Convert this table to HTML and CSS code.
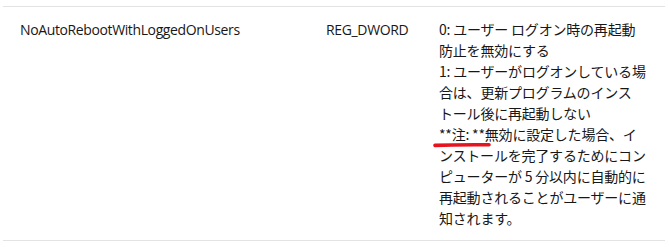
FILE: index.html
```html
<!DOCTYPE html>
<html lang="ja">
<head>
<meta charset="utf-8">
<link rel="stylesheet" href="styles.css">
</head>
<body>
<div class="wrap">
  <table class="policy">
    <tbody>
      <tr>
        <td class="name">NoAutoRebootWithLoggedOnUsers</td>
        <td class="type">REG_DWORD</td>
        <td class="desc">0: ユーザー ログオン時の再起動<br>防止を無効にする<br>1: ユーザーがログオンしている場<br>合は、更新プログラムのインス<br>トール後に再起動しない<br><span class="note">**注: **<svg class="mark" width="60" height="8" viewBox="0 0 60 8"><path d="M2 4.4 Q 20 3.6 56 3.8" stroke="#e5141f" stroke-width="3.6" stroke-linecap="round" fill="none"/></svg></span>無効に設定した場合、イ<br>ンストールを完了するためにコン<br>ピューターが 5 分以内に自動的に<br>再起動されることがユーザーに通<br>知されます。</td>
      </tr>
    </tbody>
  </table>
</div>
</body>
</html>
```
FILE: styles.css
```css
html, body {
  margin: 0;
  padding: 0;
  background: #ffffff;
}
.wrap {
  padding: 6px 4px 0 3px;
}
.policy {
  width: 662px;
  border-collapse: collapse;
  font-family: "Segoe UI", "Open Sans", "Noto Sans CJK JP", sans-serif;
  font-size: 14px;
  line-height: 21px;
  color: #171717;
}
.policy td {
  border-top: 1px solid #e3e3e3;
  border-bottom: 1px solid #e3e3e3;
  vertical-align: top;
  padding: 12px 0 11px 0;
  white-space: nowrap;
}
.name {
  width: 306px;
  padding-left: 17px !important;
  letter-spacing: -0.38px;
}
.type {
  width: 113px;
  letter-spacing: -0.35px;
}
.desc {
  font-family: "Noto Sans CJK JP", sans-serif;
  letter-spacing: -0.2px;
}
.note {
  position: relative;
}
.mark {
  position: absolute;
  left: -6px;
  top: 17px;
}
```
